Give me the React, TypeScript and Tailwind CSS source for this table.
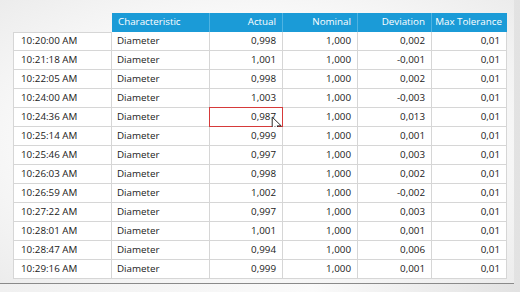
const rows: [string, string, string, string][] = [
  ['10:20:00 AM', '0,998', '1,000', '0,002'],
  ['10:21:18 AM', '1,001', '1,000', '-0,001'],
  ['10:22:05 AM', '0,998', '1,000', '0,002'],
  ['10:24:00 AM', '1,003', '1,000', '-0,003'],
  ['10:24:36 AM', '0,987', '1,000', '0,013'],
  ['10:25:14 AM', '0,999', '1,000', '0,001'],
  ['10:25:46 AM', '0,997', '1,000', '0,003'],
  ['10:26:03 AM', '0,998', '1,000', '0,002'],
  ['10:26:59 AM', '1,002', '1,000', '-0,002'],
  ['10:27:22 AM', '0,997', '1,000', '0,003'],
  ['10:28:01 AM', '1,001', '1,000', '0,001'],
  ['10:28:47 AM', '0,994', '1,000', '0,006'],
  ['10:29:16 AM', '0,999', '1,000', '0,001'],
];

const cell = 'h-[19px] flex items-center border-b border-r border-[#d6d6d6] bg-white';
const head = 'h-[19px] flex items-center whitespace-nowrap bg-[#1b9bd7] text-white';

export default function App() {
  return (
    <div
      className="w-[520px] h-[292px] overflow-hidden bg-[linear-gradient(90deg,#f0f0f0_0%,#fafafa_60%,#e2e2e2_100%)] text-[9.8px] text-[#1a1a1a]"
      style={{ fontFamily: '"Open Sans", "Noto Sans", sans-serif' }}
    >
      <div className="w-[514px] h-[284px] border-b border-[#8a8a8a] bg-[radial-gradient(ellipse_at_center,#ffffff_45%,#ececec_100%)] pt-[13px] pl-[13px]">
        <div className="grid grid-cols-[99px_98px_73px_75px_74px_75px] w-[494px]">
          {/* header */}
          <div className="h-[19px]" />
          <div className={`${head} pl-[6px] border-r border-[#4fb3e2]`}>Characteristic</div>
          <div className={`${head} justify-end pr-[6px] border-r border-[#4fb3e2]`}>Actual</div>
          <div className={`${head} justify-end pr-[6px] border-r border-[#4fb3e2]`}>Nominal</div>
          <div className={`${head} justify-end pr-[6px] border-r border-[#4fb3e2]`}>Deviation</div>
          <div className={`${head} justify-end pr-[5px]`}>Max Tolerance</div>

          {rows.map(([time, actual, nominal, dev], i) => (
            <div key={i} className="contents">
              <div className={`${cell} border-l pl-[7px] ${i === 0 ? 'border-t' : ''}`}>{time}</div>
              <div className={`${cell} pl-[5px]`}>Diameter</div>
              <div className={`${cell} justify-end pr-[6px] relative`}>
                {actual}
                {i === 4 && (
                  <>
                    <div className="absolute inset-[-1px] border-[1.5px] border-[#d63a3a]" />
                    <svg className="absolute left-[61px] top-[8px]" width="13" height="17" viewBox="0 0 12 16">
                      <path d="M1 1 L1 12.5 L3.8 10 L5.8 14.5 L7.6 13.7 L5.7 9.3 L9.5 9.3 Z" fill="#fff" stroke="#222" strokeWidth="0.9" strokeLinejoin="round" />
                    </svg>
                  </>
                )}
              </div>
              <div className={`${cell} justify-end pr-[6px]`}>{nominal}</div>
              <div className={`${cell} justify-end pr-[6px]`}>{dev}</div>
              <div className={`${cell} justify-end pr-[6px]`}>0,01</div>
            </div>
          ))}
        </div>
      </div>
    </div>
  );
}
